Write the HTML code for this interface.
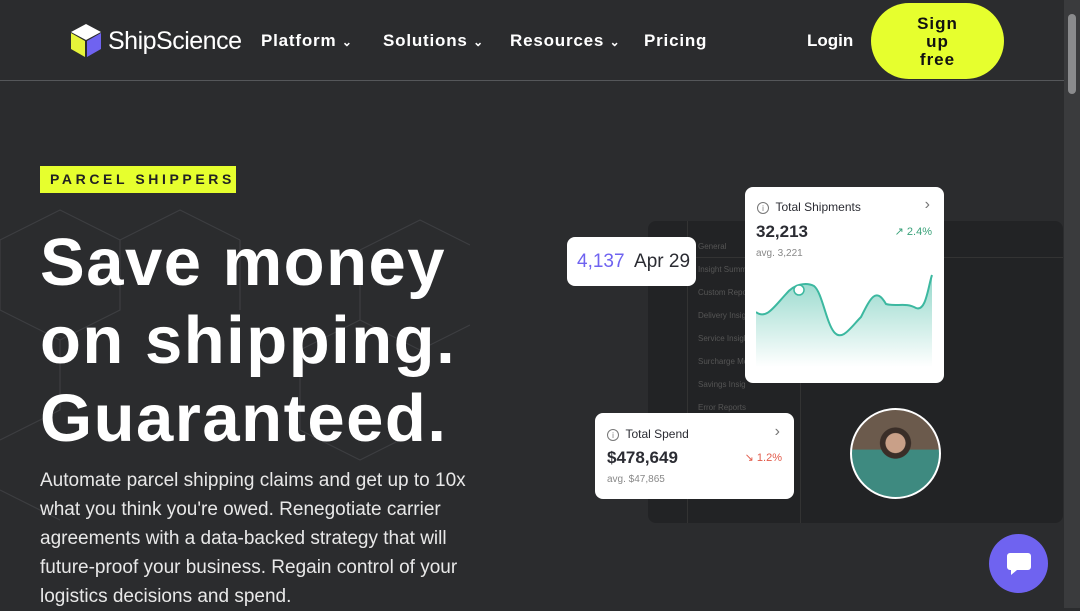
<!DOCTYPE html>
<html><head><style>
*{margin:0;padding:0;box-sizing:border-box}
body{width:1080px;height:608px;overflow:hidden;background:#2b2c2e;font-family:"Liberation Sans",sans-serif;color:#fff;position:relative}
.nav{position:absolute;left:0;top:0;width:1064px;height:81px;border-bottom:1px solid #55575a}
.nav a{position:absolute;top:31px;font-size:17px;font-weight:bold;letter-spacing:.8px;color:#fff}
.scroll{position:absolute;right:0;top:0;width:16px;height:608px;background:#3a3b3d}
.scroll i{position:absolute;left:4px;top:14px;width:8px;height:80px;background:#8a8b8d;border-radius:4px}
.card{position:absolute;background:#fff;border-radius:8px;color:#2b2c33}
</style></head><body>
<div class="nav">
 <svg style="position:absolute;left:69px;top:23px" width="34" height="35" viewBox="0 0 34 35"><polygon points="17,1 32,9 17,17 2,9" fill="#fff"/><polygon points="2,10 16,18 16,34 2,26" fill="#e6f33a"/><polygon points="18,18 32,10 32,26 18,34" fill="#6f63f0"/></svg>
 <div style="position:absolute;left:108px;top:27px;font-size:25px;letter-spacing:-.5px">ShipScience</div>
 <a style="left:261px">Platform <span style="font-size:12px">⌄</span></a>
 <a style="left:383px">Solutions <span style="font-size:12px">⌄</span></a>
 <a style="left:510px">Resources <span style="font-size:12px">⌄</span></a>
 <a style="left:644px">Pricing</a>
 <a style="left:807px;letter-spacing:0">Login</a>
 <div style="position:absolute;left:871px;top:3px;width:133px;height:76px;border-radius:38px;background:#e6ff2e;color:#111;font-weight:bold;font-size:17px;letter-spacing:1px;text-align:center;line-height:18px;padding-top:12px">Sign<br>up<br>free</div>
</div>
<svg style="position:absolute;left:0;top:190px" width="470" height="340" stroke="#3d3e41" fill="none" stroke-width="1.2"><path d="M0,50 L60,20 L120,50 L120,120 L60,150 L0,120 Z M120,50 L180,20 L240,50 M240,50 L240,120 M360,60 L420,30 L470,55 M360,60 L360,130 L420,160 L470,135 M300,160 L360,130 M300,160 L300,240 L360,270 L420,240 M60,150 L60,220 L0,250 M0,300 L60,330"/></svg>
<div style="position:absolute;left:40px;top:166px;width:196px;height:27px;background:#e6ff2e;color:#222;font-size:14px;letter-spacing:3.6px;font-weight:bold;line-height:27px;padding-left:10px">PARCEL SHIPPERS</div>
<div style="position:absolute;left:40px;top:224px;font-size:67px;font-weight:bold;line-height:78px;letter-spacing:1.5px">Save money<br>on shipping.<br>Guaranteed.</div>
<div style="position:absolute;left:40px;top:466px;font-size:19px;line-height:29px;color:#e8e8e8;width:440px">Automate parcel shipping claims and get up to 10x what you think you're owed. Renegotiate carrier agreements with a data-backed strategy that will future-proof your business. Regain control of your logistics decisions and spend.</div>
<div style="position:absolute;left:648px;top:221px;width:415px;height:302px;background:#222325;border-radius:8px">
 <div style="position:absolute;left:39px;top:0;width:1px;height:302px;background:#333"></div>
 <div style="position:absolute;left:152px;top:0;width:1px;height:302px;background:#333"></div>
 <div style="position:absolute;left:40px;top:36px;width:375px;height:1px;background:#333"></div>
 <div style="position:absolute;left:50px;top:14px;font-size:8px;color:#555;line-height:23px">General<br>Insight Summ<br>Custom Repo<br>Delivery Insig<br>Service Insigh<br>Surcharge Mo<br>Savings Insig<br>Error Reports</div>
</div>
<div class="card" style="left:567px;top:237px;width:129px;height:49px;font-size:19px;line-height:49px;padding-left:10px"><span style="color:#6f63f0">4,137</span>&nbsp; Apr 29</div>
<div class="card" style="left:745px;top:187px;width:199px;height:196px">
 <div style="position:absolute;left:12px;top:13px;font-size:12px"><span style="display:inline-block;width:12px;height:12px;border:1px solid #777;border-radius:50%;font-size:8px;text-align:center;line-height:11px;color:#777">i</span>&nbsp; Total Shipments</div>
 <div style="position:absolute;right:14px;top:9px;font-size:16px;color:#777">›</div>
 <div style="position:absolute;left:11px;top:35px;font-size:17px;font-weight:bold">32,213</div>
 <div style="position:absolute;right:12px;top:38px;font-size:11px;color:#3aa27a">↗ 2.4%</div>
 <div style="position:absolute;left:11px;top:61px;font-size:10px;color:#888">avg. 3,221</div>
 <svg style="position:absolute;left:11px;top:85px" width="178" height="95"><defs><linearGradient id="g" x1="0" y1="0" x2="0" y2="1"><stop offset="0" stop-color="#3cb8a0" stop-opacity=".55"/><stop offset="1" stop-color="#3cb8a0" stop-opacity="0"/></linearGradient></defs><path d="M0,40 C10,48 18,35 30,22 C38,12 50,10 58,14 C66,20 70,50 78,60 C86,70 95,55 105,45 C115,25 120,15 130,32 C140,35 150,30 160,36 C170,40 172,15 176,3 L176,95 L0,95 Z" fill="url(#g)"/><path d="M0,40 C10,48 18,35 30,22 C38,12 50,10 58,14 C66,20 70,50 78,60 C86,70 95,55 105,45 C115,25 120,15 130,32 C140,35 150,30 160,36 C170,40 172,15 176,3" stroke="#3cb8a0" stroke-width="2" fill="none"/><circle cx="43" cy="18" r="5" fill="#fff" stroke="#3cb8a0" stroke-width="1.5"/></svg>
</div>
<div class="card" style="left:595px;top:413px;width:199px;height:86px">
 <div style="position:absolute;left:12px;top:14px;font-size:12px"><span style="display:inline-block;width:12px;height:12px;border:1px solid #777;border-radius:50%;font-size:8px;text-align:center;line-height:11px;color:#777">i</span>&nbsp; Total Spend</div>
 <div style="position:absolute;right:14px;top:10px;font-size:16px;color:#777">›</div>
 <div style="position:absolute;left:12px;top:35px;font-size:17px;font-weight:bold">$478,649</div>
 <div style="position:absolute;right:12px;top:38px;font-size:11px;color:#e25a4a">↘ 1.2%</div>
 <div style="position:absolute;left:12px;top:61px;font-size:10px;color:#888">avg. $47,865</div>
</div>
<div style="position:absolute;left:850px;top:408px;width:91px;height:91px;border-radius:50%;border:2px solid #fff;background:radial-gradient(circle at 50% 38%,#c9a088 0 14%,#3a2e28 15% 22%,transparent 23%),linear-gradient(180deg,#6b5a4c 0 45%,#3e8a80 46%)"></div>
<div style="position:absolute;left:989px;top:534px;width:59px;height:59px;border-radius:50%;background:#6f63f0"><svg style="position:absolute;left:16px;top:16px" width="28" height="28" viewBox="0 0 28 28"><path d="M5,3 H23 A3,3 0 0 1 26,6 V17 A3,3 0 0 1 23,20 H12 L6,25 V20 H5 A3,3 0 0 1 2,17 V6 A3,3 0 0 1 5,3 Z" fill="#fff"/></svg></div>
<div class="scroll"><i></i></div>
</body></html>
